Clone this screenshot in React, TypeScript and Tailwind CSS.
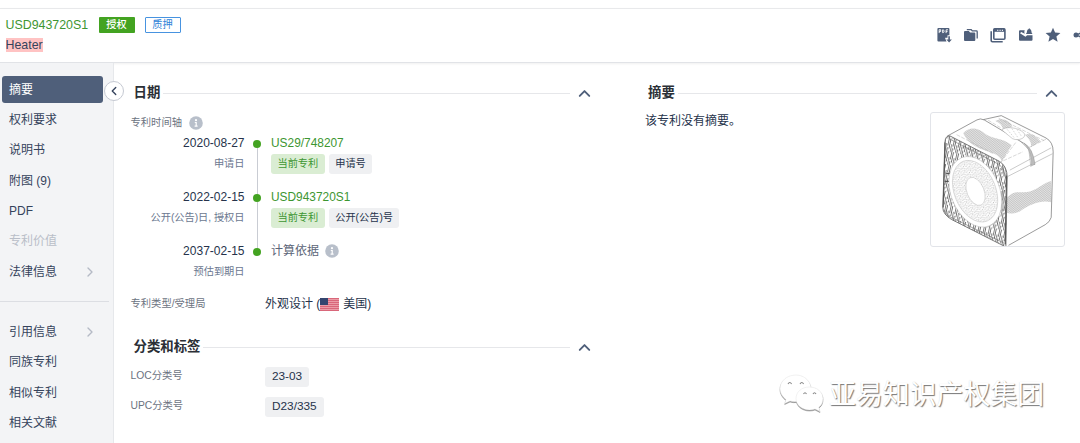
import type { ReactNode } from "react";
import { ChevronLeft, ChevronRight, ChevronUp } from "lucide-react";

type NavEntry = { label: string; active?: boolean; disabled?: boolean; expandable?: boolean };

const MAIN_NAV: NavEntry[] = [
  { label: "摘要", active: true },
  { label: "权利要求" },
  { label: "说明书" },
  { label: "附图 (9)" },
  { label: "PDF" },
  { label: "专利价值", disabled: true },
  { label: "法律信息", expandable: true },
];

const RELATED_NAV: NavEntry[] = [
  { label: "引用信息", expandable: true },
  { label: "同族专利" },
  { label: "相似专利" },
  { label: "相关文献" },
];

const TIMELINE = [
  { date: "2020-08-27", label: "申请日", title: "US29/748207", kind: "申请号" },
  { date: "2022-02-15", label: "公开(公告)日, 授权日", title: "USD943720S1", kind: "公开(公告)号" },
  { date: "2037-02-15", label: "预估到期日", title: "计算依据" },
];

function NavItem({ item }: { item: NavEntry }) {
  if (item.active) {
    return (
      <div className="mr-[10px] mb-[2px] ml-[2px] flex h-[27px] items-center rounded-[3px] bg-[#4f5f7a] pl-[7px] text-white">
        {item.label}
      </div>
    );
  }
  return (
    <div
      className={`flex h-[30.3px] items-center justify-between pr-[15px] pl-[9px] ${item.disabled ? "text-[#b9bec8]" : "text-[#35435c]"}`}
    >
      {item.label}
      {item.expandable && <ChevronRight className="size-[16px] text-[#b4bac5]" strokeWidth={2} />}
    </div>
  );
}

function SectionHead({ title }: { title: string }) {
  return (
    <div className="flex h-[20px] items-center">
      <h2 className="text-[13.4px] leading-[20px] font-bold text-[#2b2f36]">{title}</h2>
      <div className="ml-[3px] h-px flex-1 bg-[#e6e7ea]" />
      <ChevronUp className="ml-[5px] size-[19px] text-[#4f5f7a]" strokeWidth={2.4} />
    </div>
  );
}

function InfoDot() {
  return (
    <svg viewBox="0 0 14 14" className="size-[14px] shrink-0">
      <circle cx="7" cy="7" r="6.8" fill="#b8bfca" />
      <circle cx="7" cy="4.2" r="1.1" fill="#fff" />
      <path d="M5.8 6.5h1.4v3.6M5.6 10.2h3" stroke="#fff" strokeWidth="1.2" fill="none" />
    </svg>
  );
}

function Tag({ green, children }: { green?: boolean; children: ReactNode }) {
  return (
    <span
      className={`flex h-[20px] items-center rounded-[3px] px-[6.5px] text-[10.2px] whitespace-nowrap ${green ? "bg-[#daedd3] text-[#3d9631]" : "bg-[#eff0f2] text-[#26334b]"}`}
    >
      {children}
    </span>
  );
}

function Toolbar() {
  return (
    <div className="flex items-center gap-[11.2px] text-[#4f5f7a]">
      {/* PDF download */}
      <svg viewBox="0 0 16 16" className="size-[16px]" fill="currentColor">
        <path d="M2.4 1h10a1 1 0 0 1 1 1v6.3h-1.9v2.4H9.2v.9l1.3 2.9H2.4a1 1 0 0 1-1-1V2a1 1 0 0 1 1-1Z" />
        <path
          d="M3.2 6.1V2.7h1.5v1.8H3.2M6.6 2.8v2.9h.5c1.3 0 1.3-2.9 0-2.9ZM10.1 6.1V2.8H12M10.1 4.5h1.4"
          fill="none"
          stroke="#fff"
          strokeWidth=".9"
        />
        <path d="M12.3 9.2h1.6v3.3h2L13.1 15.6l-2.8-3.1h2z" />
      </svg>
      {/* folders */}
      <svg viewBox="0 0 16 16" className="size-[16px]" fill="currentColor">
        <path d="M2 4h3.8l1.3 1.4h4.2q1 0 1 1v6.5q0 1-1 1H2q-1 0-1-1V5q0-1 1-1Z" />
        <path d="M3.8 2.6h4.4l1.1 1.3h4.1q.8 0 .8.8v6.7" fill="none" stroke="currentColor" strokeWidth="1.3" />
      </svg>
      {/* windows */}
      <svg viewBox="0 0 16 16" className="size-[16px]" fill="none" stroke="currentColor">
        <rect x="3.8" y="1.8" width="11.1" height="10.4" rx="1" strokeWidth="1.6" />
        <path d="M3.8 3.2h11.1" strokeWidth="3.2" />
        <path d="M7.3 3.3h1M9.6 3.3h1M11.9 3.3h1" stroke="#fff" strokeWidth="1.2" />
        <path d="M1.2 4.2v9.4q0 1.2 1.2 1.2h10.3" strokeWidth="1.6" />
      </svg>
      {/* mail alert */}
      <svg viewBox="0 0 16 16" className="size-[16px]" fill="currentColor">
        <path d="M2 3.3h4.7q-.8 1.7 0 3.4L3.2 4.9 2 6.2l5.5 3.6 1.6-1.6h5.4v4.6q0 1-1 1H2q-1 0-1-1V4.3q0-1 1-1Z" />
        <path d="M7.9 7Q9 6 9 4.2 9.2 2.2 10.7 1.9q.5-1.6 1 0Q13.4 2.3 13.4 4.2q0 1.8 1.1 2.8z" />
      </svg>
      {/* star */}
      <svg viewBox="0 0 16 16" className="size-[16px]" fill="currentColor">
        <path d="m8 .7 2.1 4.9 5.3.5-4 3.5 1.2 5.2L8 12.1l-4.6 2.7 1.2-5.2L.6 6.1l5.3-.5z" />
      </svg>
      {/* share */}
      <svg viewBox="0 0 16 16" className="size-[16px]" fill="currentColor">
        <circle cx="4" cy="8" r="2.5" />
        <path d="m4 8 4.5-1.8M4 8l4.5 1.8" stroke="currentColor" strokeWidth="1.4" />
        <circle cx="10" cy="5.3" r="2.2" />
        <circle cx="10" cy="10.7" r="2.2" />
      </svg>
    </div>
  );
}

function UsFlag() {
  return (
    <svg viewBox="0 0 19 13" className="mr-[4px] h-[13px] w-[19px]">
      <rect width="19" height="13" fill="#eb9ca6" />
      <path d="M0 .5h19M0 2.5h19M0 4.5h19M0 6.5h19M0 8.5h19M0 10.5h19M0 12.5h19" stroke="#d9677a" />
      <rect width="8" height="7" fill="#34456f" />
    </svg>
  );
}

/** Line drawing of the heater, seen from the front left. */
function HeaterDrawing() {
  return (
    <svg viewBox="0 0 405 405" className="size-full" fill="none" stroke="#666" strokeWidth="2">
      <defs>
        <pattern id="grille" width="16" height="40" patternUnits="userSpaceOnUse" patternTransform="rotate(12)">
          <path d="M2 0v24M7 12v28M12 0v15M12 23v17M7 0v6" stroke="#555" strokeWidth="2.4" />
        </pattern>
        <pattern id="dots" width="5" height="5" patternUnits="userSpaceOnUse" patternTransform="rotate(40)">
          <path d="M0 1.5h5M2.5 0v5" stroke="#999" strokeWidth="1.2" />
        </pattern>
        <pattern id="speckle" width="17" height="19" patternUnits="userSpaceOnUse" patternTransform="rotate(19)">
          <path
            d="M1 2h3M8 1v3M13 5h3M4 8v3M10 9h3M1 14h3M8 14v3M14 14h2M6 5h2M12 17h3"
            stroke="#8a8a8a"
            strokeWidth="1.6"
          />
        </pattern>
      </defs>
      {/* printed waves */}
      <g fill="url(#dots)" stroke="none">
        <path d="M98 62C112 44 138 42 158 58 184 82 216 74 246 98L216 146C198 106 132 128 98 62Z" />
        <path d="M196 24C216 12 240 22 248 42L218 52C220 38 208 30 196 24Z" />
        <path d="M286 66C310 58 320 74 334 86L304 104C308 90 298 78 286 66Z" />
        <path d="M230 260C256 226 282 252 314 234 342 220 350 210 366 208V272C338 264 304 276 270 300 256 306 240 308 230 304Z" />
      </g>
      {/* front face */}
      <path
        d="M58 70 208 147Q232 162 232 195L228 408 62 324Q36 308 36 288L42 92Q44 66 58 70Z"
        fill="url(#grille)"
        strokeWidth="2.6"
      />
      <path d="M43 90 37 288M46 184H64V208H42M230 190 226 400" stroke="#555" strokeWidth="3.5" />
      <path d="M54 78 206 156Q222 166 222 192M42 296Q46 314 66 320L222 396" stroke="#777" strokeWidth="2" />
      <path d="M204 240 222 236V300L204 296Z" fill="#999" stroke="none" opacity=".6" />
      <g transform="rotate(-22 135 240)">
        <ellipse cx="135" cy="240" rx="74" ry="112" fill="#fff" stroke="#bbb" strokeWidth="1.4" />
        <ellipse cx="135" cy="238" rx="63" ry="98" fill="url(#speckle)" stroke="#bbb" strokeWidth="1.4" />
        <ellipse cx="136" cy="239" rx="26" ry="45" fill="#fff" stroke="#bbb" strokeWidth="1.4" />
      </g>
      {/* housing */}
      <path d="M50 70 140 21Q150 15 162 21L282 92Q308 108 314 158" />
      <path d="M160 20 214 8 350 76Q372 88 372 118L366 318Q362 332 348 340L236 403" />
      <path d="M232 194 370 124M240 174 366 106M270 84 298 112 304 164" stroke="#999" strokeWidth="1.6" />
      <path
        d="M258 90 214 148M78 66 190 124M174 22 214 46M206 16 344 84M296 106 350 80M206 152 280 118"
        stroke="#aaa"
        strokeWidth="1.4"
        strokeDasharray="12 4"
      />
      <path d="M284 92Q310 106 317 156L306 161Q306 122 290 100Z" fill="#bbb" stroke="#888" strokeWidth="1.2" />
      {/* knob */}
      <path d="M216 52C224 40 266 42 284 62 292 78 262 86 248 78Z" fill="#fff" stroke="#999" strokeWidth="1.4" />
      <path d="M232 50 254 76M246 47 266 77M262 50 276 72" stroke="#aaa" strokeWidth="1.4" strokeDasharray="5 4" />
    </svg>
  );
}

function Watermark() {
  return (
    <div className="pointer-events-none absolute top-[374px] left-[779px] flex items-center">
      <svg
        viewBox="0 0 46 42"
        className="h-[42px] w-[46px] [filter:drop-shadow(0.8px_1px_0.4px_#888)]"
        fill="#fff"
        stroke="#e4e4e4"
        strokeWidth=".5"
      >
        <path d="M17 1C8 1 1 7 1 14.5 1 19 3.5 23 7 25.5L5.7 29.5 11 27Q14 28 18 27.5L32 13C30.7 6 24.5 1 17 1Z" />
        <path d="M30.5 13C22.5 13 17 18 17 24.5S23 36 30.5 36q3 0 5.5-1l5 2.5-1.2-4.3C43 31 44 28 44 24.5 44 18 38 13 30.5 13Z" />
        <path
          d="M9 10q1.8-3 3.6 0M21 10q1.8-3 3.6 0M24.5 20q1.5-2.5 3 0M34 20q1.5-2.5 3 0"
          fill="none"
          stroke="#888"
          strokeWidth="1.1"
        />
      </svg>
      <span className="ml-[4px] text-[26.9px] leading-[42px] whitespace-nowrap text-white [text-shadow:1px_1px_1px_#777,0_0_1px_#ddd]">
        亚易知识产权集团
      </span>
    </div>
  );
}

export default function App() {
  return (
    <div className="relative flex h-[443px] w-[1080px] flex-col overflow-hidden bg-white pt-[8px] font-['Liberation_Sans','Noto_Sans_CJK_SC',sans-serif] text-[12px] text-[#35435c]">
      <header className="flex h-[55px] shrink-0 justify-between border-t border-b border-t-[#e8e9eb] border-b-[#e1e3e7] shadow-[0_1px_2px_#00000010]">
        <div className="pt-[7px] pl-[5.5px]">
          <div className="flex h-[18px] items-center">
            <span className="w-[93px] text-[12.4px] text-[#3d9631]">USD943720S1</span>
            <span className="flex h-[16px] w-[36px] items-center justify-center rounded-[1px] bg-[#43a321] text-[10.2px] font-medium text-white">
              授权
            </span>
            <span className="ml-[10px] flex h-[16px] w-[36px] items-center justify-center rounded-[1px] border border-[#4793e0] text-[10.2px] text-[#2f83d8]">
              质押
            </span>
          </div>
          <div className="mt-[4px] flex h-[14px]">
            <span className="bg-[#ffc3c3] text-[12.4px] leading-[14px]">Heater</span>
          </div>
        </div>
        <div className="-mr-[8px] pt-[18px]">
          <Toolbar />
        </div>
      </header>

      <div className="flex min-h-0 flex-1">
        <aside className="relative w-[114px] shrink-0 border-r border-[#e6e8eb] bg-[#f3f4f6] pt-[13px]">
          <nav>
            {MAIN_NAV.map((item) => (
              <NavItem key={item.label} item={item} />
            ))}
          </nav>
          <div className="mt-[14px] mr-[4px] mb-[15px] h-px bg-[#dcdee3]" />
          <nav>
            {RELATED_NAV.map((item) => (
              <NavItem key={item.label} item={item} />
            ))}
          </nav>
          <button className="absolute top-[18px] -right-[11px] flex size-[20px] items-center justify-center rounded-full border border-[#c5c9d2] bg-white">
            <ChevronLeft className="size-[14px] text-[#35435c]" strokeWidth={2.3} />
          </button>
        </aside>

        <main className="flex flex-1 pt-[20px]">
          <div className="ml-[16.5px] w-[463px]">
            <div className="pl-[3px]">
              <SectionHead title="日期" />
            </div>
            <div className="mt-[12px] flex h-[16px] items-center gap-[7px] text-[10.3px] text-[#6c737f]">
              专利时间轴
              <InfoDot />
            </div>
            <div className="mt-[4px]">
              {TIMELINE.map((event, i) => (
                <div key={event.date} className="flex h-[54px]">
                  <div className="w-[114px] text-right">
                    <div className="leading-[16px] text-[#26334b]">{event.date}</div>
                    <div className="mt-[5px] text-[10.2px] leading-[16px] text-[#6b7890]">{event.label}</div>
                  </div>
                  <div className="ml-[8.5px] flex w-[8px] flex-col items-center">
                    <div className={`h-[5px] w-px ${i > 0 ? "bg-[#c9ccd3]" : ""}`} />
                    <div className="size-[8px] shrink-0 rounded-full bg-[#43a321]" />
                    {i < TIMELINE.length - 1 && <div className="w-px flex-1 bg-[#c9ccd3]" />}
                  </div>
                  <div className="ml-[10px]">
                    {event.kind ? (
                      <>
                        <div className="text-[11.9px] leading-[16px] text-[#3d9631]">{event.title}</div>
                        <div className="mt-[3px] flex gap-[4px]">
                          <Tag green>当前专利</Tag>
                          <Tag>{event.kind}</Tag>
                        </div>
                      </>
                    ) : (
                      <div className="flex items-center gap-[6px] leading-[16px] text-[#5c6678]">
                        {event.title}
                        <InfoDot />
                      </div>
                    )}
                  </div>
                </div>
              ))}
            </div>
            <div className="-mt-[3px] flex h-[20px] items-center">
              <span className="w-[134.5px] text-[10.3px] text-[#6c737f]">专利类型/受理局</span>
              <span className="flex items-center text-[#26334b]">
                外观设计&nbsp;(
                <UsFlag />
                美国)
              </span>
            </div>

            <div className="mt-[23px] pl-[3px]">
              <SectionHead title="分类和标签" />
            </div>
            <div className="mt-[10px] flex">
              <span className="w-[134.5px] text-[10.3px] leading-[18px] text-[#6c737f]">LOC分类号</span>
              <span className="flex h-[20px] items-center rounded-[3px] bg-[#eff0f2] px-[7px] text-[11.8px] text-[#26334b]">23-03</span>
            </div>
            <div className="mt-[10px] flex">
              <span className="w-[134.5px] text-[10.3px] leading-[18px] text-[#6c737f]">UPC分类号</span>
              <span className="flex h-[20px] items-center rounded-[3px] bg-[#eff0f2] px-[7px] text-[11.8px] text-[#26334b]">D23/335</span>
            </div>
          </div>

          <div className="ml-[51.5px] w-[420px]">
            <div className="pl-[3px] [&>div]:w-[413px]">
              <SectionHead title="摘要" />
            </div>
            <div className="mt-[9px] flex justify-between">
              <p className="leading-[18px] text-[#26334b]">该专利没有摘要。</p>
              <div className="size-[135px] overflow-hidden rounded-[3px] border border-[#e2e4e9]">
                <HeaterDrawing />
              </div>
            </div>
          </div>
        </main>
      </div>
      <Watermark />
    </div>
  );
}
